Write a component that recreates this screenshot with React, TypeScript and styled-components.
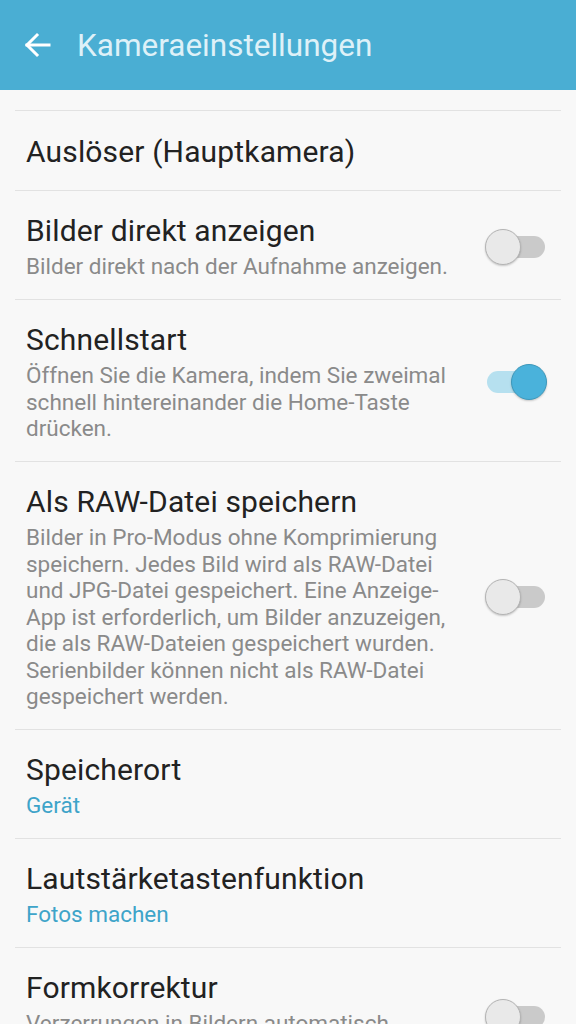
import styled, { createGlobalStyle } from 'styled-components';

const GlobalStyle = createGlobalStyle`
    html, body {
        margin: 0;
        padding: 0;
        background: #f8f8f8;
        font-family: Roboto, "Noto Sans", sans-serif;
    }
`;

const Page = styled.div`
    width: 576px;
    height: 1024px;
    overflow: hidden;
    background: #f8f8f8;
`;

const AppBar = styled.header`
    height: 90px;
    background: #4aaed3;
    display: flex;
    align-items: center;
    padding-left: 24px;
    gap: 25px;
    box-sizing: border-box;
`;

const BackButton = styled.button`
    border: 0;
    background: none;
    padding: 0;
    width: 28px;
    height: 28px;
    display: flex;
    align-items: center;
    justify-content: center;
`;

const Title = styled.h1`
    margin: 0;
    font-weight: 400;
    font-size: 31.5px;
    color: #def1f8;
`;

const List = styled.div`
    padding-top: 20px;
`;

const Divider = styled.div`
    height: 1px;
    margin: 0 15px;
    background: #e2e2e2;
`;

const Row = styled.div<{ $single?: boolean }>`
    display: flex;
    align-items: center;
    padding: ${p => (p.$single ? '24px 29px 21px 26px' : '23px 29px 19.5px 26px')};
    gap: 12px;
`;

const Texts = styled.div`
    flex: 1;
    min-width: 0;
`;

const ItemTitle = styled.div`
    font-size: 30px;
    line-height: 34px;
    color: #222;
    letter-spacing: 0.15px;
`;

const Sub = styled.div<{ $accent?: boolean }>`
    margin-top: 5px;
    font-size: 22.5px;
    line-height: 26.5px;
    color: ${p => (p.$accent ? '#3ea4c9' : '#8a8a8a')};
    max-width: 426px;
`;

const Switch = styled.div`
    position: relative;
    width: 62px;
    height: 36px;
    flex-shrink: 0;
`;

const Track = styled.div<{ $on?: boolean }>`
    position: absolute;
    left: 2px;
    right: 2px;
    top: 7px;
    height: 22px;
    border-radius: 11px;
    background: ${p => (p.$on ? '#b6e0ef' : '#cacaca')};
`;

const Thumb = styled.div<{ $on?: boolean }>`
    position: absolute;
    top: 0;
    left: ${p => (p.$on ? '26px' : '0')};
    width: 34px;
    height: 34px;
    border-radius: 50%;
    background: ${p => (p.$on ? '#4ab2db' : '#e9e9e9')};
    border: 1px solid ${p => (p.$on ? '#3d98bb' : '#b4b4b4')};
    box-shadow: 0 1px 2px rgba(0, 0, 0, 0.2);
`;

const Toggle = ({ on }: { on?: boolean }) => (
    <Switch>
        <Track $on={on} />
        <Thumb $on={on} />
    </Switch>
);

type Item = {
    title: string;
    sub?: string;
    accent?: boolean;
    toggle?: boolean;
    on?: boolean;
};

const items: Item[] = [
    { title: 'Auslöser (Hauptkamera)' },
    { title: 'Bilder direkt anzeigen', sub: 'Bilder direkt nach der Aufnahme anzeigen.', toggle: true },
    {
        title: 'Schnellstart',
        sub: 'Öffnen Sie die Kamera, indem Sie zweimal schnell hintereinander die Home-Taste drücken.',
        toggle: true,
        on: true,
    },
    {
        title: 'Als RAW-Datei speichern',
        sub: 'Bilder in Pro-Modus ohne Komprimierung speichern. Jedes Bild wird als RAW-Datei und JPG-Datei gespeichert. Eine Anzeige-App ist erforderlich, um Bilder anzuzeigen, die als RAW-Dateien gespeichert wurden. Serienbilder können nicht als RAW-Datei gespeichert werden.',
        toggle: true,
    },
    { title: 'Speicherort', sub: 'Gerät', accent: true },
    { title: 'Lautstärketastenfunktion', sub: 'Fotos machen', accent: true },
    { title: 'Formkorrektur', sub: 'Verzerrungen in Bildern automatisch korrigieren.', toggle: true },
];

export default function App() {
    return (
        <Page>
            <GlobalStyle />
            <AppBar>
                <BackButton>
                    <svg width="28" height="28" viewBox="0 0 28 28" fill="none" stroke="#fff" strokeWidth="3" strokeLinecap="square">
                        <path d="M3 14h22" />
                        <path d="M13 4L3 14l10 10" />
                    </svg>
                </BackButton>
                <Title>Kameraeinstellungen</Title>
            </AppBar>
            <List>
                {items.map(item => (
                    <div key={item.title}>
                        <Divider />
                        <Row $single={!item.sub}>
                            <Texts>
                                <ItemTitle>{item.title}</ItemTitle>
                                {item.sub && <Sub $accent={item.accent}>{item.sub}</Sub>}
                            </Texts>
                            {item.toggle && <Toggle on={item.on} />}
                        </Row>
                    </div>
                ))}
            </List>
        </Page>
    );
}
